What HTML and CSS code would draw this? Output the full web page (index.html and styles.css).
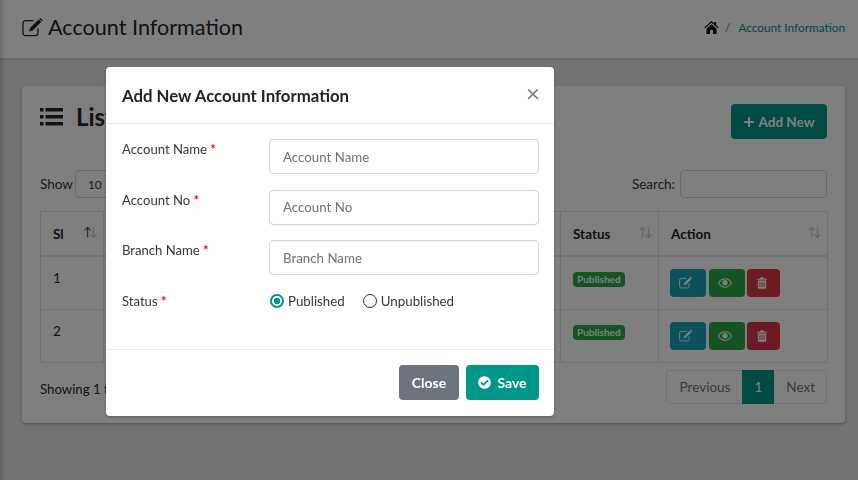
FILE: index.html
```html
<!DOCTYPE html>
<html lang="en">
<head>
  <meta charset="UTF-8">
  <title>Account Information</title>
  <link rel="stylesheet" href="styles.css">
</head>
<body>

<header class="page-head">
  <h1>
    <svg class="head-icon" viewBox="0 0 22 20"><path d="M16 11.500V16a2.600 2.600 0 0 1-2.600 2.600H3.600A2.600 2.600 0 0 1 1 16V6.200a2.600 2.600 0 0 1 2.600-2.600h8" fill="none" stroke="currentColor" stroke-width="1.300"/><path d="M8 11 16.600 2.400l2.600 2.600-8.600 8.600-3.400.8zM17.600 1.400a.9.9 0 0 1 1.300 0l1.300 1.300a.9.9 0 0 1 0 1.300l-.4.4-2.600-2.600z" fill="currentColor"/></svg>
    Account Information
  </h1>
  <nav class="crumbs">
    <svg class="home-icon" viewBox="0 0 16 14"><path d="M8 0 0.200 6.900l.9 1L8 1.900l6.900 6 .9-1L13 4.400V1h-2v1.700z" fill="currentColor"/><path d="M2.600 8.400 8 3.600l5.400 4.800V14H9.600V9.800H6.400V14H2.600z" fill="currentColor"/></svg>
    <span class="sep">/</span>
    <a href="#">Account Information</a>
  </nav>
</header>

<main class="card">
  <div class="card-top">
    <h2>
      <svg class="list-icon" viewBox="0 0 23 18"><path d="M0 0h3.500v3.500H0zM5.500 0H23v3.500H5.500zM0 7h3.500v3.500H0zM5.500 7H23v3.500H5.500zM0 14h3.500v3.500H0zM5.500 14H23v3.500H5.500z" fill="currentColor"/></svg>
      List
    </h2>
    <a class="btn btn-add" href="#">
      <svg class="plus-icon" viewBox="0 0 448 512"><path d="M416 208H272V64c0-17.670-14.330-32-32-32h-32c-17.670 0-32 14.330-32 32v144H32c-17.670 0-32 14.330-32 32v32c0 17.670 14.330 32 32 32h144v144c0 17.670 14.330 32 32 32h32c17.670 0 32-14.330 32-32V304h144c17.670 0 32-14.330 32-32v-32c0-17.670-14.330-32-32-32z" fill="currentColor"/></svg>
      Add New
    </a>
  </div>

  <div class="table-tools">
    <label class="tool tool-show">Show <span class="select-box">10</span></label>
    <label class="tool tool-search">Search: <span class="search-box"></span></label>
  </div>

  <table class="data-table">
    <colgroup>
      <col class="col-sl"><col class="col-a"><col class="col-b"><col class="col-c"><col class="col-status"><col class="col-action">
    </colgroup>
    <thead>
      <tr>
        <th>Sl <span class="sort sort-up"><i>↑</i><i>↓</i></span></th>
        <th>Account Name</th>
        <th>Account No</th>
        <th>Branch Name</th>
        <th>Status <span class="sort"><i>↑</i><i>↓</i></span></th>
        <th>Action <span class="sort"><i>↑</i><i>↓</i></span></th>
      </tr>
    </thead>
    <tbody>
      <tr>
        <td>1</td><td></td><td></td><td></td>
        <td><span class="badge">Published</span></td>
        <td>
          <div class="actions">
            <a class="act act-edit" href="#"><svg viewBox="0 0 22 20"><path d="M16 11.500V16a2.600 2.600 0 0 1-2.600 2.600H3.600A2.600 2.600 0 0 1 1 16V6.200a2.600 2.600 0 0 1 2.600-2.600h8" fill="none" stroke="currentColor" stroke-width="1.500"/><path d="M8 11 16.600 2.400l2.600 2.600-8.600 8.600-3.400.8zM17.600 1.400a.9.9 0 0 1 1.300 0l1.300 1.300a.9.9 0 0 1 0 1.300l-.4.4-2.600-2.600z" fill="currentColor"/></svg></a>
            <a class="act act-view" href="#"><svg viewBox="0 0 20 14"><path d="M.8 7C3 3 6.300 1 10 1s7 2 9.200 6c-2.200 4-5.500 6-9.200 6S3 11 .8 7z" fill="none" stroke="currentColor" stroke-width="1.500"/><circle cx="10" cy="6.500" r="3.800" fill="currentColor"/></svg></a>
            <a class="act act-del" href="#"><svg viewBox="0 0 14 16"><path d="M5 0h4l1 2h4v1.500H0V2h4zM1.200 4.500h11.600V14.500A1.500 1.500 0 0 1 11.300 16H2.700a1.500 1.500 0 0 1-1.500-1.500zM3.500 6.500v7h1.200v-7zM6.400 6.500v7h1.200v-7zM9.300 6.500v7h1.200v-7z" fill="currentColor" fill-rule="evenodd"/></svg></a>
          </div>
        </td>
      </tr>
      <tr>
        <td>2</td><td></td><td></td><td></td>
        <td><span class="badge">Published</span></td>
        <td>
          <div class="actions">
            <a class="act act-edit" href="#"><svg viewBox="0 0 22 20"><path d="M16 11.500V16a2.600 2.600 0 0 1-2.600 2.600H3.600A2.600 2.600 0 0 1 1 16V6.200a2.600 2.600 0 0 1 2.600-2.600h8" fill="none" stroke="currentColor" stroke-width="1.500"/><path d="M8 11 16.600 2.400l2.600 2.600-8.600 8.600-3.400.8zM17.600 1.400a.9.9 0 0 1 1.300 0l1.300 1.300a.9.9 0 0 1 0 1.300l-.4.4-2.600-2.600z" fill="currentColor"/></svg></a>
            <a class="act act-view" href="#"><svg viewBox="0 0 20 14"><path d="M.8 7C3 3 6.300 1 10 1s7 2 9.200 6c-2.200 4-5.500 6-9.200 6S3 11 .8 7z" fill="none" stroke="currentColor" stroke-width="1.500"/><circle cx="10" cy="6.500" r="3.800" fill="currentColor"/></svg></a>
            <a class="act act-del" href="#"><svg viewBox="0 0 14 16"><path d="M5 0h4l1 2h4v1.500H0V2h4zM1.200 4.500h11.600V14.500A1.500 1.500 0 0 1 11.300 16H2.700a1.500 1.500 0 0 1-1.500-1.500zM3.500 6.500v7h1.200v-7zM6.400 6.500v7h1.200v-7zM9.300 6.500v7h1.200v-7z" fill="currentColor" fill-rule="evenodd"/></svg></a>
          </div>
        </td>
      </tr>
    </tbody>
  </table>

  <div class="table-foot">
    <div class="info">Showing 1 to 2 of 2 entries</div>
    <div class="pager">
      <a href="#">Previous</a><a class="current" href="#">1</a><a href="#">Next</a>
    </div>
  </div>
</main>

<div class="backdrop"></div>

<div class="modal">
  <div class="modal-head">
    <h3>Add New Account Information</h3>
    <span class="close-x">×</span>
  </div>
  <form class="modal-body">
    <div class="form-row">
      <label>Account Name <b>*</b></label>
      <input type="text" placeholder="Account Name">
    </div>
    <div class="form-row">
      <label>Account No <b>*</b></label>
      <input type="text" placeholder="Account No">
    </div>
    <div class="form-row">
      <label>Branch Name <b>*</b></label>
      <input type="text" placeholder="Branch Name">
    </div>
    <div class="form-row radio-row">
      <label>Status <b>*</b></label>
      <div class="radios">
        <span class="radio"><i class="dot on"></i>Published</span>
        <span class="radio"><i class="dot"></i>Unpublished</span>
      </div>
    </div>
  </form>
  <div class="modal-foot">
    <a class="btn btn-close" href="#">Close</a>
    <a class="btn btn-save" href="#">
      <svg class="check-icon" viewBox="0 0 512 512"><path d="M504 256c0 136.967-111.033 248-248 248S8 392.967 8 256 119.033 8 256 8s248 111.033 248 248zM227.314 387.314l184-184c6.248-6.248 6.248-16.379 0-22.627l-22.627-22.627c-6.248-6.249-16.379-6.249-22.628 0L216 308.118l-70.059-70.059c-6.248-6.248-16.379-6.248-22.628 0l-22.627 22.627c-6.248 6.248-6.248 16.379 0 22.627l104 104c6.249 6.249 16.379 6.249 22.628.001z" fill="currentColor"/></svg>
      Save
    </a>
  </div>
</div>

</body>
</html>
```

FILE: styles.css
```css
* {
  box-sizing: border-box;
}
html, body {
  height: 480px;
  overflow: hidden;
}
body {
  margin: 0;
  background: #e6e6e6;
  font-family: Lato, "Liberation Sans", sans-serif;
  font-size: 13.5px;
  color: #343a40;
}
a {
  text-decoration: none;
}

.page-head {
  height: 58px;
  padding: 0 13px 4px 22px;
  background: #fff;
  box-shadow: 0 1px 3px rgba(0,0,0,.2);
  display: flex;
  align-items: center;
  justify-content: space-between;
}
.page-head h1 {
  margin: 0;
  font-size: 21.6px;
  font-weight: 400;
  color: #212529;
  display: flex;
  align-items: center;
  gap: 4px;
}
.head-icon {
  width: 22px;
  height: 20px;
}
.crumbs {
  display: flex;
  align-items: center;
  font-size: 11.8px;
}
.crumbs a {
  color: #009688;
}
.home-icon {
  width: 15px;
  height: 13px;
  color: #111;
}
.sep {
  margin: 0 8px 0 6px;
  color: #6c757d;
}

.card {
  margin: 28px 13px 0 22px;
  height: 337px;
  padding: 18px 18px 0;
  background: #fff;
  border-radius: 4px;
  box-shadow: 0 1px 3px rgba(0,0,0,.3);
}
.card-top {
  display: flex;
  justify-content: space-between;
  align-items: flex-start;
}
.card-top h2 {
  margin: 0;
  font-size: 24px;
  font-weight: 700;
  line-height: 26px;
  color: #212529;
  display: flex;
  align-items: center;
  gap: 13px;
}
.list-icon {
  width: 23px;
  height: 18px;
}
.btn {
  display: inline-flex;
  align-items: center;
  justify-content: center;
  height: 35px;
  border-radius: 4px;
  color: #fff;
  font-weight: 700;
  font-size: 14px;
}
.btn-add {
  width: 96px;
  background: #009688;
  gap: 5px;
  font-size: 13.5px;
}
.plus-icon {
  width: 10px;
  height: 12px;
}

.table-tools {
  margin-top: 31px;
  display: flex;
  justify-content: space-between;
  height: 28px;
}
.tool {
  display: flex;
  align-items: center;
}
.tool-show {
  gap: 2px;
}
.tool-search {
  gap: 5px;
}
.select-box, .search-box {
  display: block;
  height: 28px;
  border: 1px solid #ced4da;
  border-radius: 4px;
  background: #fff;
  font-size: 12px;
}
.select-box {
  width: 60px;
  padding: 6px 12px;
}
.search-box {
  width: 147px;
}

.data-table {
  margin-top: 13px;
  width: 787px;
  border-collapse: collapse;
  table-layout: fixed;
}
.col-sl { width: 63px; }
.col-a { width: 160px; }
.col-b { width: 150px; }
.col-c { width: 147px; }
.col-status { width: 98px; }
.col-action { width: 169px; }
.data-table th, .data-table td {
  border: 1px solid #dee2e6;
  padding: 12px;
  text-align: left;
  vertical-align: top;
}
.data-table th {
  height: 44px;
  border-bottom-width: 2px;
  font-weight: 700;
  color: #212529;
  white-space: nowrap;
  position: relative;
  padding-top: 14px;
}
.data-table td {
  height: 53px;
  color: #212529;
}
.data-table td:first-child {
  padding-top: 13px;
}
.sort {
  position: absolute;
  right: 8px;
  top: 12px;
  font-size: 12px;
  font-weight: 400;
  letter-spacing: -3px;
}
.sort i {
  font-style: normal;
  opacity: .3;
}
.sort-up i:first-child {
  opacity: .9;
}
.badge {
  display: inline-block;
  margin-top: 3px;
  padding: 0 4px;
  height: 15px;
  line-height: 15px;
  border-radius: 4px;
  background: #28a745;
  color: #fff;
  font-size: 10px;
  font-weight: 700;
}
.actions {
  display: flex;
  gap: 3px;
  margin-left: -1px;
}
.act {
  height: 28px;
  border-radius: 4px;
  color: #fff;
  display: flex;
  align-items: center;
  justify-content: center;
  padding-right: 4px;
}
.act-edit { width: 36px; background: #17a2b8; }
.act-view { width: 36px; background: #28a745; }
.act-del { width: 33px; margin-left: -1px; background: #dc3545; }
.act-edit svg { width: 14px; height: 13px; }
.act-view svg { width: 14px; height: 10px; }
.act-del svg { width: 10px; height: 12px; }

.table-foot {
  display: flex;
  justify-content: space-between;
  margin-top: 7px;
}
.info {
  padding-top: 11px;
  font-size: 13.2px;
  color: #212529;
}
.pager {
  display: flex;
  height: 34px;
  border: 1px solid #dee2e6;
  border-radius: 4px;
}
.pager a {
  padding: 0 12px;
  line-height: 32px;
  color: #6c757d;
}
.pager a:first-child {
  padding-left: 13px;
}
.pager a:last-child {
  padding-right: 11px;
}
.pager .current {
  background: #009688;
  color: #fff;
  margin: -1px 0;
  line-height: 34px;
}

.backdrop {
  position: fixed;
  inset: 0;
  background: rgba(0,0,0,.5);
  box-shadow: inset 5px 0 5px -3px rgba(0,0,0,.2);
}
.modal {
  position: fixed;
  left: 106px;
  top: 67px;
  width: 448px;
  height: 349px;
  background: #fff;
  border-radius: 4px;
  box-shadow: 0 1px 3px rgba(0,0,0,.3);
}
.modal-head {
  height: 57px;
  padding: 0 15px 0 16px;
  border-bottom: 1px solid #e9ecef;
  display: flex;
  align-items: center;
  justify-content: space-between;
}
.modal-head h3 {
  margin: 0;
  font-size: 16.8px;
  font-weight: 700;
  color: #212529;
}
.close-x {
  font-size: 24px;
  line-height: 24px;
  color: #7f7f7f;
  margin-top: -5px;
  margin-right: -1px;
}
.modal-body {
  height: 225px;
  padding: 15px 15px 0 16px;
}
.form-row {
  display: flex;
  height: 50.500px;
}
.form-row label {
  width: 147px;
  padding-top: 2px;
  font-size: 13.1px;
  color: #343a40;
}
.form-row label b {
  color: #f00;
  font-weight: 700;
}
.form-row input {
  width: 270px;
  height: 35px;
  padding: 0 13px;
  border: 1px solid #ced4da;
  border-radius: 4px;
  font-family: inherit;
  font-size: 13.3px;
}
.form-row input::placeholder {
  color: #6c757d;
}
.radio-row {
  align-items: flex-start;
}
.radios {
  display: flex;
  gap: 17px;
  padding-top: 2px;
  font-size: 13.3px;
}
.radio {
  display: flex;
  align-items: center;
  gap: 4px;
}
.dot {
  width: 14px;
  height: 14px;
  border: 1.500px solid #333;
  border-radius: 50%;
  background: #fff;
  margin-left: 1px;
}
.dot.on {
  border: 2px solid #009688;
  background: radial-gradient(circle, #009688 0 3px, #fff 3.500px);
}
.modal-foot {
  height: 67px;
  padding-right: 15px;
  border-top: 1px solid #e9ecef;
  display: flex;
  justify-content: flex-end;
  align-items: flex-start;
  gap: 7px;
  padding-top: 15px;
}
.btn-close {
  width: 60px;
  background: #6c757d;
}
.btn-save {
  width: 73px;
  background: #009688;
  gap: 6px;
}
.check-icon {
  width: 13px;
  height: 13px;
}
```
